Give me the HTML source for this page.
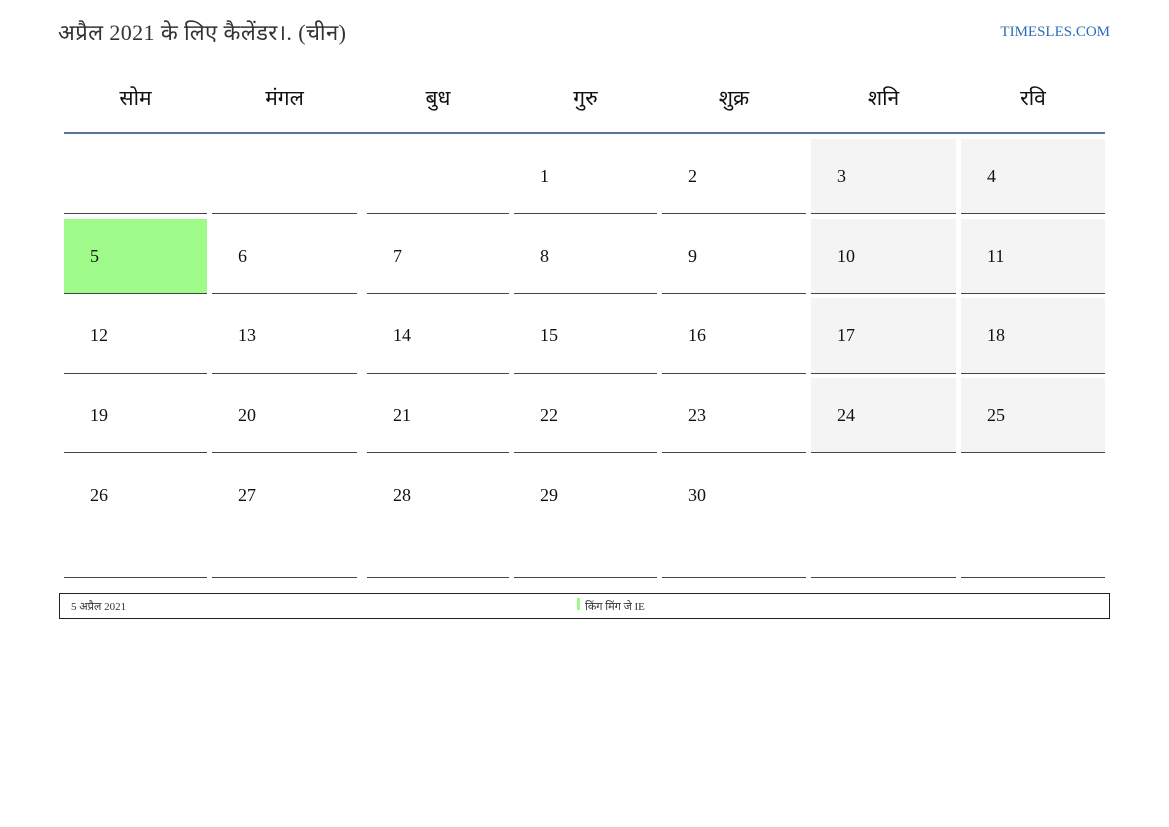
<!DOCTYPE html>
<html><head><meta charset="utf-8">
<style>
body{margin:0;width:1169px;height:827px;background:#fff;position:relative;font-family:"Liberation Serif","Noto Serif CJK SC",serif;overflow:hidden}
.a{position:absolute}
.title{left:58px;top:17px;font-size:22px;letter-spacing:0.4px;color:#333;white-space:nowrap}
.site{right:59px;top:24px;font-size:15px;color:#2a6db5}
.dn{top:84px;font-size:21px;color:#111;text-align:center}
.hl{left:64px;top:132px;width:1041px;height:2px;background:#58739c}
.c{border-bottom:1.5px solid #444;box-sizing:border-box}
.n{font-size:18px;color:#111}
.foot{left:59px;top:593px;width:1051px;height:26px;border:1.5px solid #222;box-sizing:border-box;font-size:11px;color:#333}
</style></head><body>
<div class="a title">अप्रैल 2021 के लिए कैलेंडर।. (चीन)</div>
<div class="a site">TIMESLES.COM</div>
<div id="g"></div>
<div class="a hl"></div>
<div class="a foot"><span class="a" style="left:11px;top:5px">5 अप्रैल 2021</span><span class="a" style="left:517px;top:4px;width:3px;height:12px;background:#9efb8a"></span><span class="a" style="left:525px;top:5px">किंग मिंग जे IE</span></div>
<script>
var xs=[[64,207],[212,357],[367,509],[514,657],[662,806],[811,956],[961,1105]];
var rs=[[139,214],[219,294],[298,374],[378,453],[458,578]];
var names=["सोम","मंगल","बुध","गुरु","शुक्र","शनि","रवि"];
var h="";
for(var i=0;i<7;i++){h+='<div class="a dn" style="left:'+xs[i][0]+'px;width:'+(xs[i][1]-xs[i][0])+'px">'+names[i]+'</div>';}
for(var r=0;r<5;r++){for(var c=0;c<7;c++){
 var idx=r*7+c-3; var day=(idx>=0&&idx<30)?idx+1:"";
 var bg="#fff"; if(c>=5&&r<4)bg="#f4f4f4"; if(day===5)bg="#9efb8a";
 var x=xs[c][0],w=xs[c][1]-xs[c][0],y=rs[r][0],hh=rs[r][1]-rs[r][0];
 h+='<div class="a c" style="left:'+x+'px;top:'+y+'px;width:'+w+'px;height:'+hh+'px;background:'+bg+'"></div>';
 if(day!=="")h+='<div class="a n" style="left:'+(x+26)+'px;top:'+(y+27)+'px">'+day+'</div>';
}}
document.getElementById("g").innerHTML=h;
</script>
</body></html>
